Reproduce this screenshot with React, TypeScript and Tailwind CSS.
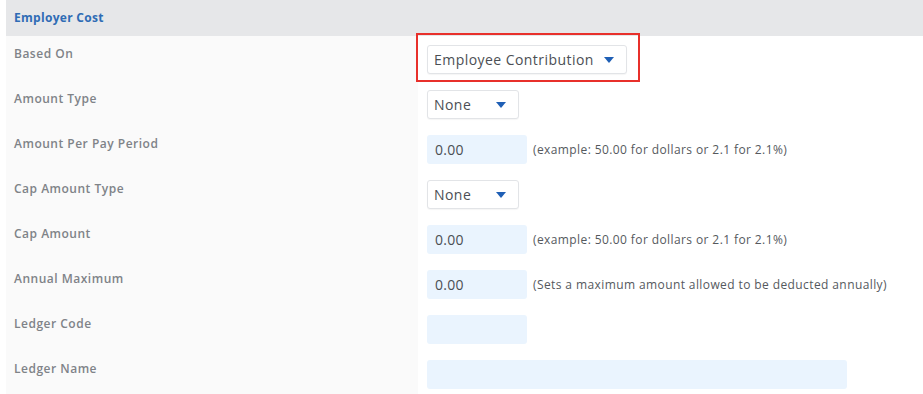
import React from "react";

const FONT = "font-['Open_Sans','Lato',sans-serif]";

type Row = {
  label: string;
  kind: "select" | "number" | "text";
  value?: string;
  width?: string;
  hint?: string;
};

const ROWS: Row[] = [
  { label: "Based On", kind: "select", value: "Employee Contribution", width: "w-[200px]" },
  { label: "Amount Type", kind: "select", value: "None", width: "w-[92px]" },
  {
    label: "Amount Per Pay Period",
    kind: "number",
    value: "0.00",
    hint: "(example: 50.00 for dollars or 2.1 for 2.1%)",
  },
  { label: "Cap Amount Type", kind: "select", value: "None", width: "w-[92px]" },
  {
    label: "Cap Amount",
    kind: "number",
    value: "0.00",
    hint: "(example: 50.00 for dollars or 2.1 for 2.1%)",
  },
  {
    label: "Annual Maximum",
    kind: "number",
    value: "0.00",
    hint: "(Sets a maximum amount allowed to be deducted annually)",
  },
  { label: "Ledger Code", kind: "number", value: "" },
  { label: "Ledger Name", kind: "text", value: "" },
];

function Caret() {
  return (
    <svg width="10" height="6" viewBox="0 0 10 6" className="shrink-0">
      <path d="M0 0h10L5 6z" fill="#1f5fb5" />
    </svg>
  );
}

function Field({ row }: { row: Row }) {
  if (row.kind === "select") {
    return (
      <div
        className={`${row.width} h-[29px] flex items-center justify-between pl-[6px] pr-[12px] bg-white border border-[#e2e4e7] rounded-[3px] shadow-[0_1px_1px_rgba(0,0,0,0.04)] text-[14px] tracking-[0.45px] text-[#4b4f54]`}
      >
        <span>{row.value}</span>
        <Caret />
      </div>
    );
  }
  return (
    <div className="flex items-center gap-[6px]">
      <div
        className={`${row.kind === "text" ? "w-[420px]" : "w-[100px]"} h-[29px] flex items-center pl-[8px] bg-[#eaf4fe] rounded-[3px] text-[14px] tracking-[0.3px] text-[#4b4f54]`}
      >
        {row.value}
      </div>
      {row.hint && (
        <span className="text-[12px] tracking-[0.4px] text-[#55595e]">{row.hint}</span>
      )}
    </div>
  );
}

export default function App() {
  return (
    <div className={`${FONT} w-[923px] h-[394px] bg-white pl-[6px] overflow-hidden relative`}>
      <div className="h-[36px] bg-[#e6e7e9] flex items-center pl-[8px]">
        <span className="text-[12px] font-bold tracking-[0.3px] text-[#2f6cb5]">Employer Cost</span>
      </div>
      <div className="flex flex-col">
        {ROWS.map((row) => (
          <div key={row.label} className="flex h-[45px]">
            <div className="w-[412px] shrink-0 bg-[#fafafa] pl-[8px] pt-[10px]">
              <span className="block leading-[16px] text-[12px] font-semibold tracking-[0.5px] text-[#7f8388]">
                {row.label}
              </span>
            </div>
            <div className="pl-[9px] pt-[9px]">
              <Field row={row} />
            </div>
          </div>
        ))}
        <div className="flex flex-1">
          <div className="w-[412px] h-[10px] bg-[#fafafa]" />
        </div>
      </div>
      {/* annotation highlight */}
      <div className="absolute left-[416px] top-[33px] w-[224px] h-[49px] border-2 border-[#e8302b]" />
    </div>
  );
}
